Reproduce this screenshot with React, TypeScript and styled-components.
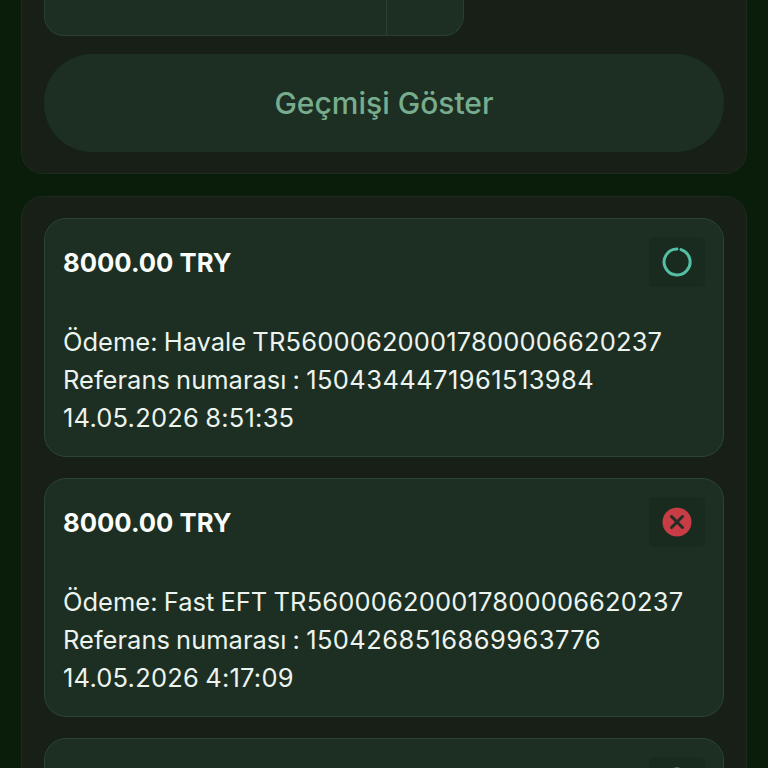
import React from 'react';
import styled, { createGlobalStyle } from 'styled-components';

const Global = createGlobalStyle`
  html, body {
    margin: 0;
    padding: 0;
    background: #0a1d0b;
  }
  body {
    font-family: Inter, "Liberation Sans", sans-serif;
  }
`;

const Page = styled.div`
  width: 768px;
  height: 768px;
  overflow: hidden;
  box-sizing: border-box;
  padding: 0 21px;
  background: #0a1d0b;
  display: flex;
  flex-direction: column;
  gap: 22px;
`;

const Panel = styled.section<{ $cut?: boolean }>`
  flex: none;
  box-sizing: border-box;
  background: #171f17;
  border: 1px solid #1d2a1f;
  border-radius: ${(p) => (p.$cut ? '0 0 22px 22px' : '22px 22px 0 0')};
  border-top-width: ${(p) => (p.$cut ? 0 : 1)}px;
  padding: ${(p) => (p.$cut ? '0 22px 21px' : '21px 22px')};
  display: flex;
  flex-direction: column;
  gap: ${(p) => (p.$cut ? 18 : 21)}px;
`;

const InputRow = styled.div`
  height: 36px;
  width: 420px;
  box-sizing: border-box;
  background: #1c2f22;
  border: 1px solid #29402f;
  border-top: 0;
  border-radius: 0 0 20px 20px;
  display: flex;
  justify-content: flex-end;
`;

const InputSuffix = styled.div`
  width: 76px;
  border-left: 1px solid #29402f;
`;

const HistoryButton = styled.button`
  height: 98px;
  border: 0;
  border-radius: 48px;
  background: #1c2f22;
  color: #78ac8e;
  font-family: inherit;
  font-size: 30px;
  font-weight: 500;
`;

const Card = styled.article`
  flex: none;
  box-sizing: border-box;
  height: 239px;
  padding: 18px 18px 0;
  background: #1c2f22;
  border: 1px solid #2b4533;
  border-radius: 22px;
`;

const CardHead = styled.div`
  display: flex;
  justify-content: space-between;
  align-items: center;
  height: 50px;
  margin-bottom: 36px;
`;

const Amount = styled.div`
  color: #fbfdfb;
  font-size: 25.7px;
  font-weight: 700;
`;

const StatusBox = styled.div`
  width: 56px;
  height: 50px;
  margin-left: auto;
  background: #192a1e;
  border-radius: 4px;
  display: flex;
  align-items: center;
  justify-content: center;
`;

const Line = styled.div`
  color: #edf3ee;
  font-size: 25.5px;
  line-height: 38.2px;
  word-spacing: -1px;
  white-space: nowrap;
`;

const Digits = styled.span<{ $spread: number }>`
  letter-spacing: ${(p) => p.$spread}px;
`;

const Spinner = () => (
  <svg width="30" height="30" viewBox="0 0 30 30" fill="none">
    <path
      d="M19 2.6A13 13 0 1 1 15 2"
      stroke="#55bfa6"
      strokeWidth="3"
      strokeLinecap="round"
    />
  </svg>
);

const Failed = () => (
  <svg width="30" height="30" viewBox="0 0 30 30" fill="none">
    <circle cx="15" cy="15" r="14.5" fill="#c73c45" />
    <path d="M9.5 9.5l11 11M20.5 9.5l-11 11" stroke="#222d25" strokeWidth="3" strokeLinecap="round" />
  </svg>
);

const Unknown = () => (
  <svg width="30" height="30" viewBox="0 0 30 30" fill="none">
    <circle cx="15" cy="15" r="14.5" fill="#9fb0a6" />
  </svg>
);

const payments = [
  {
    method: 'Havale',
    reference: '1504344471961513984',
    date: '14.05.2026 8:51:35',
    icon: <Spinner />,
  },
  {
    method: 'Fast EFT',
    reference: '1504268516869963776',
    date: '14.05.2026 4:17:09',
    icon: <Failed />,
  },
];

const App = () => (
  <Page>
    <Global />
    <Panel $cut>
      <InputRow>
        <InputSuffix />
      </InputRow>
      <HistoryButton>Geçmişi Göster</HistoryButton>
    </Panel>
    <Panel>
      {payments.map((p) => (
        <Card key={p.reference}>
          <CardHead>
            <Amount>8000.00 TRY</Amount>
            <StatusBox>{p.icon}</StatusBox>
          </CardHead>
          <Line>
            Ödeme: {p.method} <Digits $spread={0.16}>TR560006200017800006620237</Digits>
          </Line>
          <Line>
            Referans numarası : <Digits $spread={0.42}>{p.reference}</Digits>
          </Line>
          <Line>
            <Digits $spread={0.2}>{p.date}</Digits>
          </Line>
        </Card>
      ))}
      <Card>
        <CardHead>
          <StatusBox>
            <Unknown />
          </StatusBox>
        </CardHead>
      </Card>
    </Panel>
  </Page>
);

export default App;
